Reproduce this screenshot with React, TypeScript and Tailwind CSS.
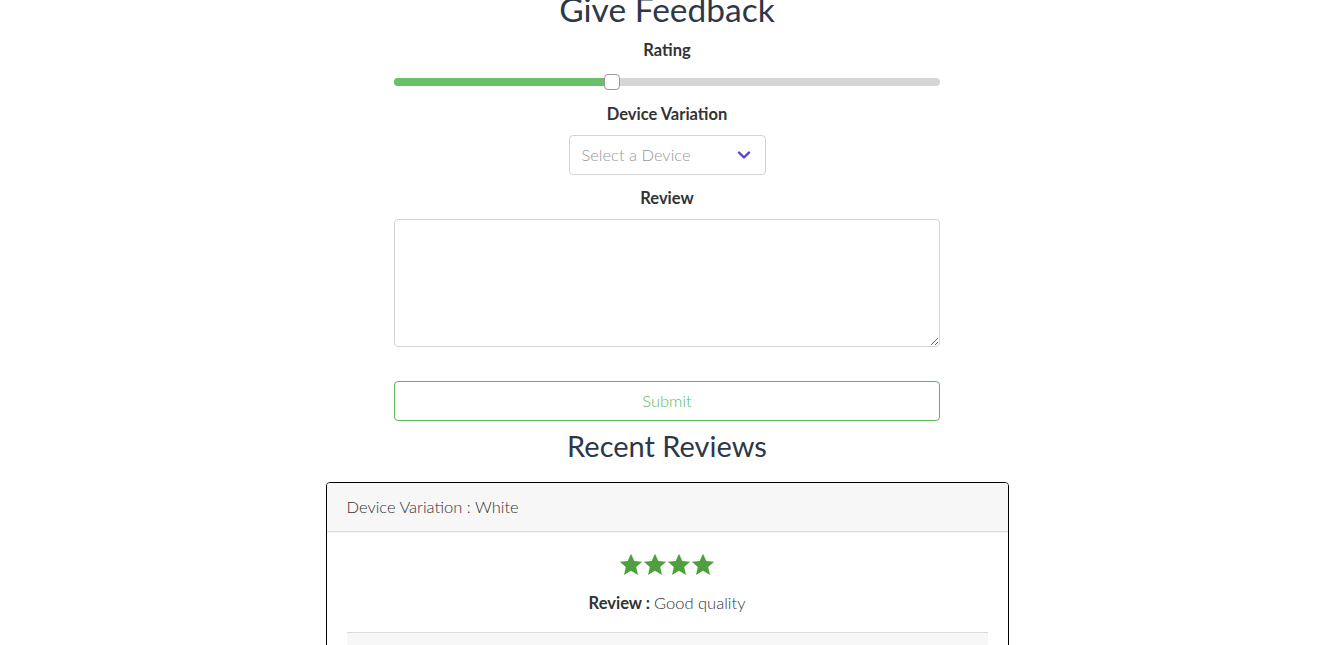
import React from "react";

function Star() {
  return (
    <svg width="24" height="24" viewBox="0 0 24 24">
      <path
        d="M12 0.8l3.3 7.2 7.9.8-6 5.3 1.8 7.8L12 17.8l-7 4.1 1.8-7.8-6-5.3 7.9-.8z"
        fill="#4f9e40"
      />
    </svg>
  );
}

export default function App() {
  return (
    <div
      className="w-[1334px] bg-white overflow-hidden h-[645px]"
      style={{ fontFamily: "Lato, 'Noto Sans', sans-serif" }}
    >
      <div className="flex flex-col items-center">
        <h1 className="mt-[-11px] h-[40px] text-[33.5px] leading-[40px] text-[#2d3748] font-normal">
          Give Feedback
        </h1>
        <div className="mt-[9px] h-[24px] text-[16.5px] leading-[24px] font-bold text-[#333]">
          Rating
        </div>
        <div className="mt-[12px] relative w-[546px] h-[16px] flex items-center">
          <div className="w-full h-[8px] rounded-full bg-[#d6d6d6]" />
          <div className="absolute left-0 top-[4px] h-[8px] w-[218px] rounded-full bg-[#6abf69]" />
          <div className="absolute left-[210px] top-0 w-[16px] h-[16px] rounded-[4px] bg-white border border-[#999]" />
        </div>
        <div className="mt-[12px] h-[24px] text-[16.5px] leading-[24px] font-bold text-[#333]">
          Device Variation
        </div>
        <div className="mt-[9px] w-[197px] h-[40px] border border-[#d4d4d4] rounded-[4px] flex items-center justify-between pl-[12px] pr-[14px]">
          <span className="text-[16.5px] text-[#999] font-light">Select a Device</span>
          <svg width="14" height="10" viewBox="0 0 14 10">
            <path d="M2 2.5l5 5 5-5" fill="none" stroke="#5a3fd1" strokeWidth="2.4" strokeLinecap="round" strokeLinejoin="round" />
          </svg>
        </div>
        <div className="mt-[11px] h-[24px] text-[16.5px] leading-[24px] font-bold text-[#333]">
          Review
        </div>
        <textarea className="mt-[9px] block w-[546px] h-[128px] border border-[#d4d4d4] rounded-[4px] outline-none p-2" />
        <button className="mt-[34px] w-[546px] h-[40px] border border-[#5cb85c] rounded-[4px] text-[#5cb85c] text-[16.5px] font-light bg-white">
          Submit
        </button>
        <h2 className="mt-[8px] h-[34px] text-[29px] leading-[34px] text-[#2d3748] font-normal">
          Recent Reviews
        </h2>
        <div className="mt-[19px] w-[683px] border border-black rounded-[4px] overflow-hidden">
          <div className="h-[49px] bg-[#f7f7f7] border-b border-[#dcdcdc] shadow-[0_1px_2px_rgba(0,0,0,0.06)] flex items-center px-[20px] text-[16.5px] font-light text-[#333]">
            Device Variation : White
          </div>
          <div className="px-[20px]">
            <div className="flex justify-center pt-[21px] h-[45px]">
              <Star />
              <Star />
              <Star />
              <Star />
            </div>
            <div className="mt-[14px] text-center text-[16.5px] leading-[24px] text-[#333] font-light">
              <span className="font-bold">Review : </span>Good quality
            </div>
            <div className="mt-[17px] border-t border-[#dcdcdc] bg-[#f7f7f7] h-[60px]" />
          </div>
        </div>
      </div>
    </div>
  );
}
